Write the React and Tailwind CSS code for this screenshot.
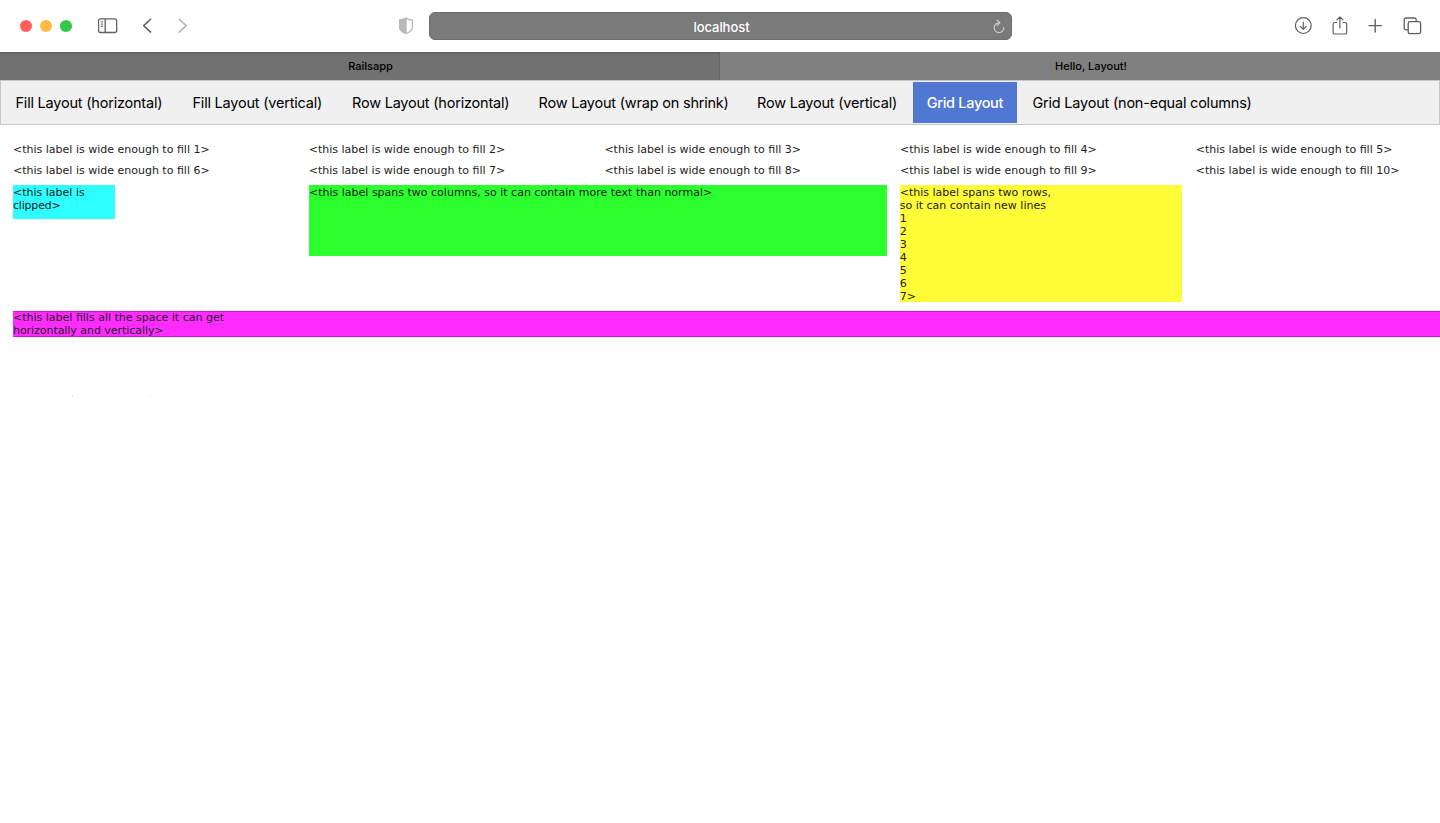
const tabs = [
  ['Fill Layout (horizontal)', 'w-[177px]'],
  ['Fill Layout (vertical)', 'w-[159.5px]'],
  ['Row Layout (horizontal)', 'w-[186.5px]'],
  ['Row Layout (wrap on shrink)', 'w-[218.5px]'],
  ['Row Layout (vertical)', 'w-[168.5px]'],
];

const labels = [1, 2, 3, 4, 5, 6, 7, 8, 9, 10];

function Toolbar() {
  return (
    <header className="flex h-[52px] shrink-0 items-center bg-white text-[#606060]">
      <div className="flex w-[388px] items-center pl-5">
        <div className="flex gap-2">
          <span className="size-3 rounded-full bg-[#ff5f5b]" />
          <span className="size-3 rounded-full bg-[#febb40]" />
          <span className="size-3 rounded-full bg-[#31c748]" />
        </div>
        <svg className="ml-[26px] h-4 w-5" viewBox="0 0 20 16" fill="none" stroke="currentColor" strokeWidth="1.3">
          <rect x="0.5" y="0.9" width="18.2" height="13.6" rx="1.8" />
          <path d="M7.2 1v13.4" />
          <path d="M2.8 3.9h2.2M2.8 6.1h2.2M2.8 8.3h2.2" strokeWidth="1" />
        </svg>
        <svg className="ml-[24px] h-4 w-[10px]" viewBox="0 0 10 16" fill="none" stroke="currentColor" strokeWidth="1.5" strokeLinecap="round" strokeLinejoin="round">
          <path d="M8.6 1.2L1.7 7.6l6.900 6.500" />
        </svg>
        <svg className="ml-[26px] h-4 w-[10px] text-[#b5b5b5]" viewBox="0 0 10 16" fill="none" stroke="currentColor" strokeWidth="1.5" strokeLinecap="round" strokeLinejoin="round">
          <path d="M1.2 1.2l6.900 6.400-6.900 6.500" />
        </svg>
      </div>
      <div className="flex w-[623.5px] items-center">
        <svg className="ml-[10px] h-[18px] w-4 text-[#b9b9b9]" viewBox="0 0 16 18" fill="none" stroke="currentColor" strokeWidth="1.3" strokeLinejoin="round">
          <path d="M8 1.1C6.3 2.3 3.8 2.9 1.7 3v7.5c0 2.9 3.3 4.8 6.3 6 3-1.2 6.3-3.1 6.3-6V3C12.2 2.9 9.7 2.3 8 1.1z" />
          <path d="M8 1.1C6.3 2.3 3.8 2.9 1.7 3v7.5c0 2.9 3.3 4.8 6.3 6z" fill="currentColor" />
        </svg>
        <div className="ml-[14.5px] flex h-7 flex-1 items-center rounded-[6px] border border-[#6e6e6e] bg-[#7a7a7a] pl-[22px] pr-[4px]">
          <span className="flex-1 pt-[3px] text-center text-[13px] font-medium tracking-[-0.05px] text-white">localhost</span>
          <svg className="h-[15px] w-[15px] text-[#c9c9c9]" viewBox="0 0 15 15" fill="none" stroke="currentColor" strokeWidth="1.2" strokeLinecap="round" strokeLinejoin="round">
            <path d="M7 3.8A4.9 4.9 0 1 0 11.900 8.700M5.200 1.2l2.7 2.6-2.7 2.7" />
          </svg>
        </div>
      </div>
      <div className="flex flex-1 items-center pl-[282.5px]">
        <svg className="h-[18px] w-[18px]" viewBox="0 0 18 18" fill="none" stroke="currentColor" strokeWidth="1.2" strokeLinecap="round" strokeLinejoin="round">
          <circle cx="9.3" cy="8.6" r="7.9" />
          <path d="M9.3 5v7.2M6.3 9.4l3 3 3-3" />
        </svg>
        <svg className="ml-[19px] h-5 w-[18px]" viewBox="0 0 18 20" fill="none" stroke="currentColor" strokeWidth="1.2" strokeLinecap="round" strokeLinejoin="round">
          <path d="M5.8 6.5H3.7a1.6 1.6 0 0 0-1.6 1.6v8.3A1.6 1.6 0 0 0 3.7 18h10.4a1.6 1.6 0 0 0 1.6-1.6V8.1a1.6 1.6 0 0 0-1.6-1.6H12M8.9 12V1M5.9 3.9l3-3 3 3" />
        </svg>
        <svg className="ml-[18px] h-4 w-4" viewBox="0 0 16 16" fill="none" stroke="currentColor" strokeWidth="1.4" strokeLinecap="round">
          <path d="M8.2 1.5v12.6M2 7.6h12.4" />
        </svg>
        <svg className="ml-5 h-[18px] w-[19px]" viewBox="0 0 19 18" fill="none" stroke="currentColor" strokeWidth="1.3" strokeLinejoin="round">
          <rect x="5.2" y="4.7" width="12.4" height="12" rx="1.8" />
          <path d="M5.2 12.8H3.1a1.9 1.9 0 0 1-1.9-1.9V2.9A1.9 1.9 0 0 1 3.1 1h8.2a1.9 1.9 0 0 1 1.9 1.9v1.8" />
        </svg>
      </div>
    </header>
  );
}

export default function App() {
  return (
    <div className="flex h-[823px] w-[1440px] flex-col overflow-hidden bg-white font-['Inter',sans-serif] text-black">
      <Toolbar />
      <div className="flex h-7 shrink-0 text-center text-[11px] font-medium">
        <div className="w-[720px] border-r border-t-2 border-[#646464] bg-[#717171] pl-[22px] leading-[24px]">Railsapp</div>
        <div className="w-[720px] bg-[#808080] pl-[22px] leading-7">Hello, Layout!</div>
      </div>
      <nav className="flex h-[45px] shrink-0 items-center whitespace-nowrap border border-[#c7c7c7] bg-[#f0f0f0] pl-[14.5px] text-[14.5px] tracking-[-0.21px]">
        {tabs.map(([name, width]) => (
          <div key={name} className={width}>{name}</div>
        ))}
        <div className="-ml-[12.6px] flex h-[41px] w-[104px] items-center justify-center bg-[#5077d1] font-medium tracking-[-0.3px] text-white">Grid Layout</div>
        <div className="ml-[15.5px]">Grid Layout (non-equal columns)</div>
      </nav>
      <main className="flex flex-col pl-[13px] pt-[18px] font-['DejaVu_Sans',Verdana,sans-serif] text-[11px] leading-[13px] text-[#222]">
        <div className="grid w-[1478.5px] grid-cols-5 whitespace-nowrap">
          {labels.map((n) => (
            <div key={n} className="h-[21px]">{`<this label is wide enough to fill ${n}>`}</div>
          ))}
        </div>
        <div className="flex h-[125.5px] items-start whitespace-pre">
          <div className="h-[34px] w-[102px] bg-[#2effff] pt-px">{'<this label is\n'}<span className="tracking-[-0.2px]">{'clipped>'}</span></div>
          <div className="ml-[194px] h-[71px] w-[578px] bg-[#2bff2e] pt-px">{'<this label spans two columns, so it can contain more text than normal>'}</div>
          <div className="ml-[12.7px] h-[117px] w-[282.5px] bg-[#fffd38] pt-px">{'<this label spans two rows,\nso it can contain new lines\n1\n2\n3\n4\n5\n6\n7>'}</div>
        </div>
        <div className="h-[26px] w-[1427px] whitespace-pre bg-[#ff2bff] shadow-[inset_0_1px_#e010e5,inset_0_-1px_#e010e5]">{'<this label fills all the space it can get\n'}<span className="tracking-[-0.05px]">{'horizontally and vertically>'}</span></div>
        <div className="ml-[59px] mt-[5.5px] flex h-[54px] w-[79px] flex-col justify-between">
          <div className="flex justify-between">
            <i className="size-px bg-[#d0d0d0]" />
            <i className="size-px bg-[#d0d0d0]" />
          </div>
          <div className="flex justify-between">
            <i className="size-px bg-[#d0d0d0]" />
            <i className="size-px bg-[#d0d0d0]" />
          </div>
        </div>
      </main>
    </div>
  );
}
